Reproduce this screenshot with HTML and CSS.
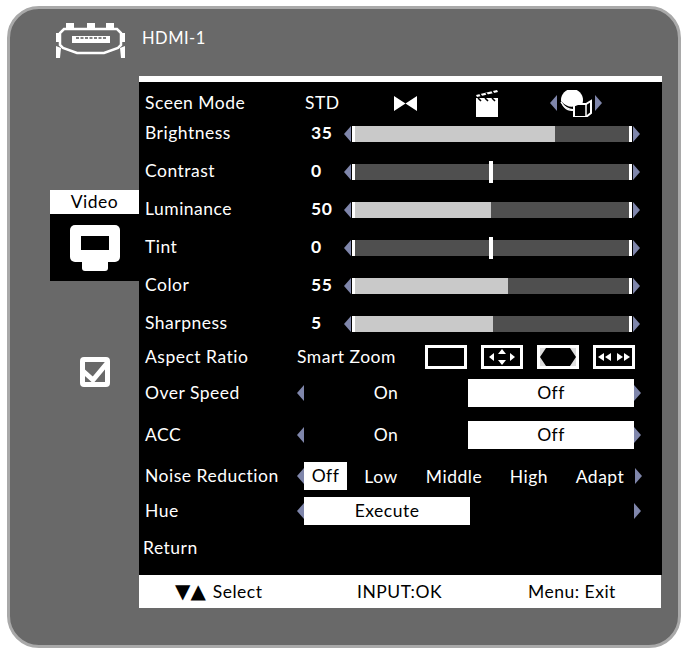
FILE: index.html
```html
<!DOCTYPE html>
<html lang="en">
<head>
  <meta charset="UTF-8">
  <title>HDMI-1 Video Menu</title>
  <link rel="stylesheet" href="styles.css">
</head>
<body>
  <div class="panel">
    <div class="side">
      <svg class="hdmi-icon" viewBox="54 21 72 38" width="72" height="38">
        <rect x="66" y="23" width="8" height="6" fill="#fff"/>
        <rect x="87" y="23" width="8" height="6" fill="#fff"/>
        <rect x="106" y="23" width="8" height="6" fill="#fff"/>
        <rect x="56" y="33" width="4" height="9" fill="#fff"/>
        <rect x="121" y="33" width="4" height="9" fill="#fff"/>
        <path d="M56 46 L61 48 L60 58 H56 Z M125 46 L120 48 L121 58 H125 Z" fill="#fff"/>
        <path d="M64 29 H117 L121 33 V45 L118 48 L104 53 H77 L63 48 L60 45 V33 Z" fill="none" stroke="#fff" stroke-width="2.5"/>
        <path d="M72 36 H110 V43 H72 Z" fill="#fff"/>
        <path d="M76 38 H106" stroke="#555" stroke-width="1.6" stroke-dasharray="3 1.5"/>
      </svg>
      <div class="video-tab">
        <div class="video-label">Video</div>
        <div class="video-body">
          <svg viewBox="70 225 50 46" width="50" height="46">
            <rect x="70" y="225" width="50" height="37" rx="5" fill="#fff"/>
            <rect x="82" y="255" width="26" height="16" rx="3" fill="#fff"/>
            <rect x="81" y="236" width="28" height="14" fill="#000"/>
          </svg>
        </div>
      </div>
      <svg class="check-icon" viewBox="0 0 30 30" width="30" height="30">
        <rect x="2.5" y="2.5" width="25" height="25" rx="1.5" fill="#696969" stroke="#fff" stroke-width="5"/>
        <path d="M3 14 L13 23 L28 5" fill="none" stroke="#fff" stroke-width="5"/>
      </svg>
    </div>

    <div class="main">
      <div class="source">HDMI-1</div>
      <div class="menu">
        <div class="row row-scene">
          <span class="label">Sceen Mode</span>
          <span class="std">STD</span>
          <svg class="bowtie" viewBox="0 0 23 15" width="23" height="15">
            <path d="M0 0 L11.5 7.5 L0 15 Z M23 0 L11.5 7.5 L23 15 Z" fill="#fff"/>
          </svg>
          <svg class="clapper" viewBox="0 0 22 27" width="22" height="27">
            <path d="M0 8 H22 V27 H0 Z" fill="#fff"/>
            <path d="M0 5 L21 0 L22 2 L1 7 Z" fill="#fff"/>
            <path d="M4 4 L6 7 M10 3 L12 6 M16 1 L18 4" stroke="#000" stroke-width="1.4"/>
            <path d="M2 8 L5 11 M9 8 L12 11 M16 8 L19 11" stroke="#000" stroke-width="1.6"/>
          </svg>
          <i class="arrow-left scene-left"></i>
          <svg class="shapes" viewBox="0 0 32 27" width="32" height="27">
            <circle cx="12" cy="10" r="11" fill="#fff"/>
            <path d="M1 11 Q9 20 18 15 V13 H31 V25 L26 27 H14 V20 Q5 20 1 11 Z" fill="#000"/>
            <path d="M1 12 Q5 19 14 20" fill="none" stroke="#fff" stroke-width="1.5"/>
            <path d="M14 14 H26 L31 11 V23 L26 27 H14 Z" fill="none" stroke="#fff" stroke-width="2"/>
            <path d="M26 14 V27" stroke="#fff" stroke-width="1.5"/>
          </svg>
          <i class="arrow-right"></i>
        </div>

        <div class="row row-slider">
          <span class="label">Brightness</span>
          <b class="value">35</b>
          <i class="arrow-left"></i>
          <div class="track"><div class="fill" style="width:73%"></div></div>
          <i class="arrow-right"></i>
        </div>
        <div class="row row-slider">
          <span class="label">Contrast</span>
          <b class="value">0</b>
          <i class="arrow-left"></i>
          <div class="track"><div class="center-tick"></div></div>
          <i class="arrow-right"></i>
        </div>
        <div class="row row-slider">
          <span class="label">Luminance</span>
          <b class="value">50</b>
          <i class="arrow-left"></i>
          <div class="track"><div class="fill" style="width:49.5%"></div></div>
          <i class="arrow-right"></i>
        </div>
        <div class="row row-slider">
          <span class="label">Tint</span>
          <b class="value">0</b>
          <i class="arrow-left"></i>
          <div class="track"><div class="center-tick"></div></div>
          <i class="arrow-right"></i>
        </div>
        <div class="row row-slider">
          <span class="label">Color</span>
          <b class="value">55</b>
          <i class="arrow-left"></i>
          <div class="track"><div class="fill" style="width:56%"></div></div>
          <i class="arrow-right"></i>
        </div>
        <div class="row row-slider">
          <span class="label">Sharpness</span>
          <b class="value">5</b>
          <i class="arrow-left"></i>
          <div class="track"><div class="fill" style="width:50.5%"></div></div>
          <i class="arrow-right"></i>
        </div>

        <div class="row row-aspect">
          <span class="label label-short">Aspect Ratio</span>
          <span class="smart-zoom">Smart Zoom</span>
          <svg class="ratio" viewBox="0 0 42 24" width="42" height="24">
            <rect x="1.5" y="1.5" width="39" height="21" fill="none" stroke="#fff" stroke-width="3"/>
          </svg>
          <svg class="ratio" viewBox="0 0 42 24" width="42" height="24">
            <rect x="1.5" y="1.5" width="39" height="21" fill="none" stroke="#fff" stroke-width="3"/>
            <path d="M8 12 L13 8 V16 Z M34 12 L29 8 V16 Z M21 4 L25 9 H17 Z M21 20 L25 15 H17 Z" fill="#fff"/>
          </svg>
          <svg class="ratio" viewBox="0 0 42 24" width="42" height="24">
            <rect x="1.5" y="1.5" width="39" height="21" fill="#000" stroke="#fff" stroke-width="3"/>
            <path d="M3 3 H9 L3 12 Z M39 3 H33 L39 12 Z M3 21 H9 L3 12 Z M39 21 H33 L39 12 Z" fill="#ddd"/>
          </svg>
          <svg class="ratio" viewBox="0 0 42 24" width="42" height="24">
            <rect x="1.5" y="1.5" width="39" height="21" fill="none" stroke="#fff" stroke-width="3"/>
            <path d="M5 12 L11 8 V16 Z M12 12 L18 8 V16 Z M37 12 L31 8 V16 Z M30 12 L24 8 V16 Z" fill="#fff"/>
          </svg>
        </div>

        <div class="row row-toggle">
          <span class="label">Over Speed</span>
          <i class="arrow-left"></i>
          <span class="opt-on">On</span>
          <span class="opt-off">Off</span>
          <i class="arrow-right"></i>
        </div>
        <div class="row row-toggle">
          <span class="label">ACC</span>
          <i class="arrow-left"></i>
          <span class="opt-on">On</span>
          <span class="opt-off">Off</span>
          <i class="arrow-right"></i>
        </div>

        <div class="row row-noise">
          <span class="label">Noise Reduction</span>
          <i class="arrow-left"></i>
          <span class="nr nr-off">Off</span>
          <span class="nr nr-low">Low</span>
          <span class="nr nr-middle">Middle</span>
          <span class="nr nr-high">High</span>
          <span class="nr nr-adapt">Adapt</span>
          <i class="arrow-right"></i>
        </div>
        <div class="row row-hue">
          <span class="label">Hue</span>
          <i class="arrow-left"></i>
          <span class="execute">Execute</span>
          <i class="arrow-right"></i>
        </div>
        <div class="row row-return">Return</div>
      </div>
      <div class="footer">
        <span class="foot-select"><span class="foot-tris">▼▲</span> Select</span>
        <span class="foot-input">INPUT:OK</span>
        <span class="foot-menu">Menu: Exit</span>
      </div>
    </div>
  </div>
</body>
</html>
```

FILE: styles.css
```css
body {
  margin: 0;
  background: #fff;
  font-family: "Lato", "Open Sans", sans-serif;
  font-size: 17.5px;
  letter-spacing: 0.5px;
  color: #fff;
}
.panel {
  box-sizing: border-box;
  display: flex;
  width: 674px;
  height: 642px;
  margin: 6px 7px 0;
  background: #696969;
  border: 3px solid #a9a9a9;
  border-radius: 32px;
}
.side {
  width: 129px;
  flex: none;
  display: flex;
  flex-direction: column;
}
.hdmi-icon {
  margin: 12px 0 0 44px;
}
.video-tab {
  margin: 131px 0 0 40px;
  width: 89px;
}
.video-label {
  height: 24px;
  line-height: 24px;
  background: #fff;
  color: #000;
  text-align: center;
}
.video-body {
  height: 67px;
  background: #000;
  display: flex;
  justify-content: center;
  box-sizing: border-box;
  padding-top: 11px;
}
.check-icon {
  margin: 76px 0 0 70px;
}
.main {
  width: 523px;
  display: flex;
  flex-direction: column;
}
.source {
  height: 67px;
  box-sizing: border-box;
  padding: 18px 0 0 3px;
  line-height: 22px;
  font-size: 16.5px;
}
.menu {
  background: #000;
  border-top: 6px solid #fff;
  height: 499px;
  box-sizing: border-box;
  padding-top: 10px;
}
.row {
  display: flex;
  align-items: center;
  padding-left: 6px;
}
.label {
  width: 152px;
  flex: none;
  white-space: nowrap;
  padding-bottom: 2px;
  box-sizing: border-box;
}
.arrow-left, .arrow-right {
  flex: none;
  width: 0;
  height: 0;
  border-top: 8px solid transparent;
  border-bottom: 8px solid transparent;
}
.arrow-left {
  border-right: 7px solid #7f86ab;
}
.arrow-right {
  border-left: 7px solid #7f86ab;
}

/* scene row */
.row-scene {
  height: 22px;
}
.row-scene .label {
  width: 160px;
}
.std {
  width: 89px;
  padding-bottom: 2px;
}
.bowtie {
  margin-right: 59px;
}
.clapper {
  margin-right: 52px;
}
.scene-left {
  margin-right: 3px;
}
.shapes {
  margin-right: 3px;
}

/* sliders */
.row-slider {
  height: 38px;
}
.row-slider .label {
  width: 166px;
}
.row-slider .arrow-left, .row-slider .arrow-right {
  margin-top: 2px;
}
.value {
  width: 33px;
  flex: none;
  padding-bottom: 2px;
}
.track {
  position: relative;
  box-sizing: border-box;
  width: 280px;
  height: 16px;
  margin: 2px 1px 0;
  background: #4f4f4f;
  border-left: 3px solid #fff;
  border-right: 3px solid #fff;
}
.fill {
  height: 100%;
  background: #c9c9c9;
}
.center-tick {
  position: absolute;
  left: 134px;
  top: -3px;
  width: 4px;
  height: 22px;
  background: #fff;
}

/* aspect */
.row-aspect {
  height: 30px;
}
.smart-zoom {
  width: 128px;
  white-space: nowrap;
  padding-bottom: 2px;
}
.ratio {
  margin-right: 14px;
}

/* on / off */
.row-toggle {
  height: 42px;
}
.opt-on {
  width: 164px;
  text-align: center;
  padding-bottom: 2px;
}
.opt-off {
  width: 166px;
  height: 28px;
  line-height: 28px;
  background: #fff;
  color: #000;
  text-align: center;
}

/* noise and hue */
.row-noise {
  height: 40px;
}
.nr {
  text-align: center;
  white-space: nowrap;
}
.nr-off {
  width: 43px;
  height: 28px;
  line-height: 28px;
  background: #fff;
  color: #000;
}
.nr-low {
  width: 68px;
}
.nr-middle {
  width: 78px;
}
.nr-high {
  width: 72px;
}
.nr-adapt {
  width: 70px;
}
.row-hue {
  height: 30px;
}
.execute {
  width: 166px;
  height: 28px;
  line-height: 28px;
  background: #fff;
  color: #000;
  text-align: center;
  margin-right: 164px;
}
.row-return {
  height: 42px;
  padding-left: 4px;
}

/* footer */
.footer {
  height: 33px;
  width: 522px;
  background: #fff;
  color: #000;
  display: flex;
  align-items: center;
}
.foot-select {
  width: 218px;
  padding-left: 36px;
  box-sizing: border-box;
}
.foot-tris {
  font-size: 20px;
  line-height: 1;
  letter-spacing: 0;
  margin-right: 2px;
  font-family: "DejaVu Sans", sans-serif;
}
.foot-input {
  width: 171px;
}
```
